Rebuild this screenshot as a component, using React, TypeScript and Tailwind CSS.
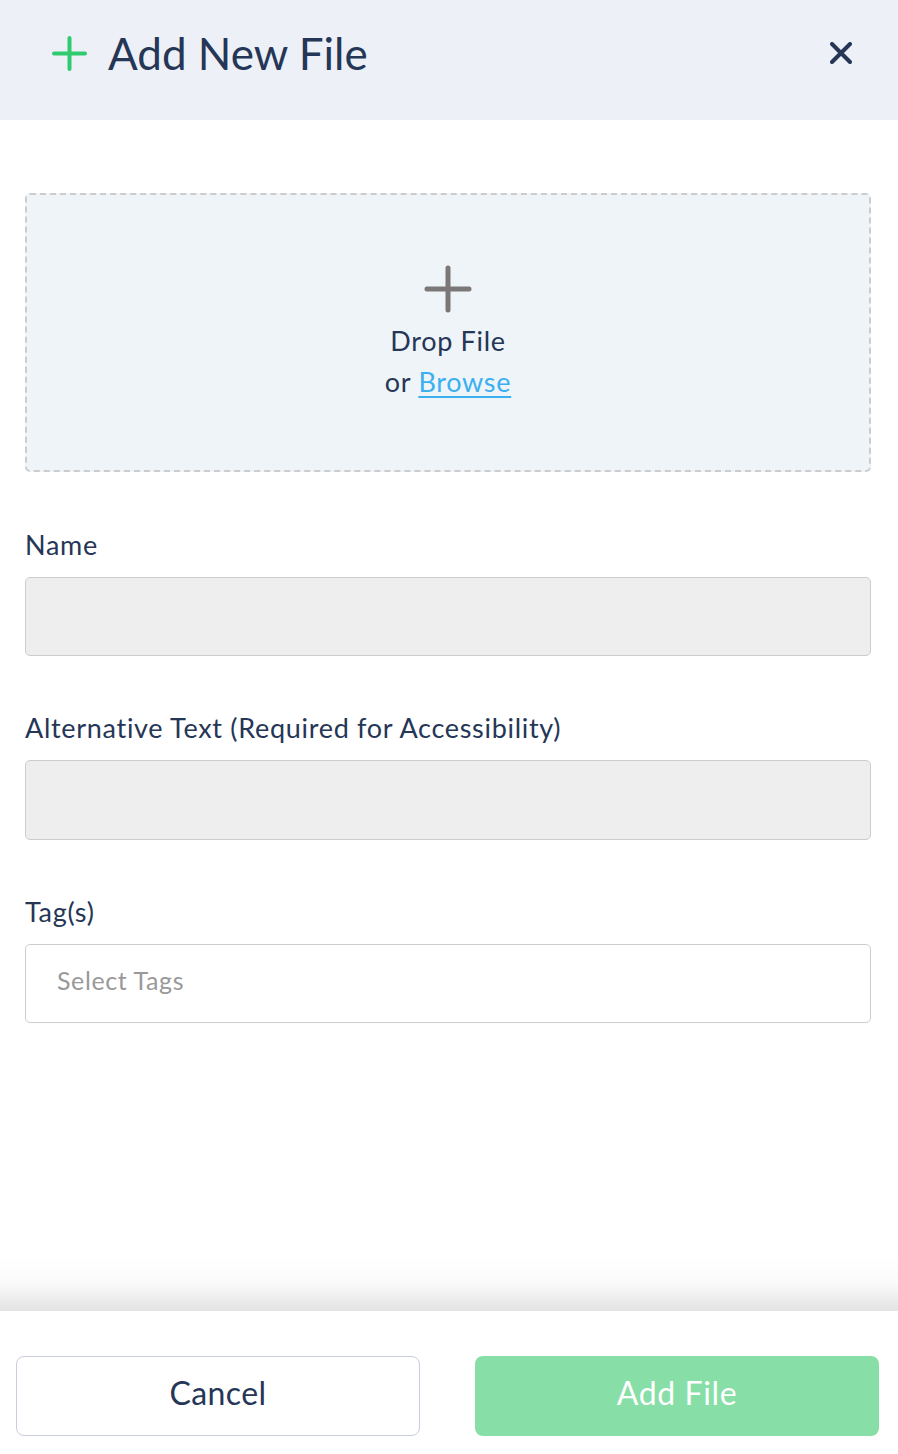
import React from "react";

const navy = "text-[#253656]";

function Field({ label, children }: { label: string; children: React.ReactNode }) {
  return (
    <div className="flex flex-col">
      <div className={`text-[27px] leading-[32px] tracking-[0.7px] ${navy}`}>{label}</div>
      <div className="mt-[16px]">{children}</div>
    </div>
  );
}

export default function App() {
  return (
    <div
      className="w-[898px] h-[1454px] flex flex-col bg-white"
      style={{ fontFamily: "Lato, 'Open Sans', sans-serif" }}
    >
      {/* Header */}
      <div className="h-[120px] shrink-0 bg-[#edf0f7] flex items-center pl-[52px] pr-[46px]">
        <svg width="35" height="35" viewBox="0 0 35 35" className="shrink-0 -mt-[14px]">
          <path d="M17.5 2 V33 M2 17.5 H33" stroke="#2fcb6e" strokeWidth="4" strokeLinecap="round" />
        </svg>
        <div className={`ml-[21px] text-[44px] leading-[50px] -mt-[14px] ${navy}`}>Add New File</div>
        <div className="flex-1" />
        <svg width="22" height="22" viewBox="0 0 22 22" className="-mt-[14px]">
          <path d="M2 2 L20 20 M20 2 L2 20" stroke="#253656" strokeWidth="4" strokeLinecap="round" />
        </svg>
      </div>

      {/* Content */}
      <div className="flex-1 flex flex-col px-[25px] pt-[73px] pr-[27px]">
        <div className="h-[279px] rounded-[5px] border-2 border-dashed border-[#cccccc] bg-[#eff4f9] flex flex-col items-center pt-[70px]">
          <svg width="48" height="48" viewBox="0 0 48 48">
            <path d="M24 3 V45 M3 24 H45" stroke="#7b7777" strokeWidth="5" strokeLinecap="round" />
          </svg>
          <div className={`mt-[7px] text-[27px] leading-[42px] tracking-[0.7px] ${navy}`}>Drop File</div>
          <div className={`-mt-[1px] text-[27px] leading-[42px] tracking-[0.7px] ${navy}`}>
            or <span className="text-[#3bb0f0] underline underline-offset-[4px] decoration-[2px]">Browse</span>
          </div>
        </div>

        <div className="mt-[57px] flex flex-col gap-[56px]">
          <Field label="Name">
            <div className="h-[79px] rounded-[5px] border border-[#cccccc] bg-[#eeeeee]" />
          </Field>
          <Field label="Alternative Text (Required for Accessibility)">
            <div className="h-[80px] rounded-[5px] border border-[#cccccc] bg-[#eeeeee]" />
          </Field>
          <Field label="Tag(s)">
            <div className="h-[79px] rounded-[5px] border border-[#cccccc] bg-white flex items-center pl-[31px] pb-[6px] text-[25px] tracking-[0.6px] text-[#999999]">
              Select Tags
            </div>
          </Field>
        </div>

        <div className="flex-1" />
        <div className="h-[56px] -mx-[25px] -mr-[27px] bg-gradient-to-b from-white via-[#fafafa] to-[#e3e3e3]" />
      </div>

      {/* Footer */}
      <div className="h-[143px] shrink-0 bg-white flex pl-[16px] pr-[19px] pt-[45px] gap-[55px]">
        <button className={`w-[404px] h-[80px] rounded-[8px] border border-[#c9cedd] bg-white text-[32px] tracking-[0.4px] pb-[6px] ${navy}`}>
          Cancel
        </button>
        <button className="w-[404px] h-[80px] rounded-[8px] bg-[#88dea7] text-white text-[32px] tracking-[0.6px] pb-[6px]">
          Add File
        </button>
      </div>
    </div>
  );
}
